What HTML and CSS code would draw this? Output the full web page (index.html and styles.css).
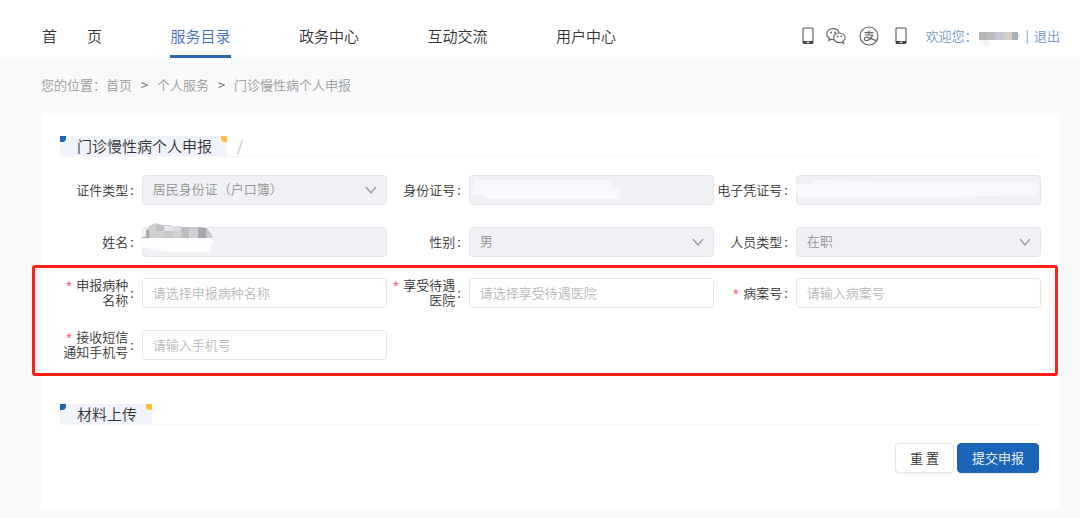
FILE: index.html
```html
<!DOCTYPE html>
<html lang="zh-CN">
<head>
<meta charset="utf-8">
<title>门诊慢性病个人申报</title>
<link rel="stylesheet" href="styles.css">
</head>
<body>
<header class="topbar">
  <nav class="nav">
    <a class="nav-link nav-home" href="#"><span>首</span><span>页</span></a>
    <a class="nav-link active" href="#">服务目录</a>
    <a class="nav-link" href="#">政务中心</a>
    <a class="nav-link" href="#">互动交流</a>
    <a class="nav-link" href="#">用户中心</a>
  </nav>
  <div class="tools">
    <svg class="phone" viewBox="0 0 12 18"><rect x="1" y="1" width="10" height="15.5" rx="1" fill="none" stroke="#555" stroke-width="1.1"/><path d="M1 14h10v2.6H1z" fill="#444"/><path d="M4.500 15.300h3" stroke="#fff"/></svg>
    <svg class="wechat" viewBox="0 0 20 18" fill="none" stroke="#666" stroke-width="1.200"><path d="M8.1 12.600c-1 .1-2-.1-2.900-.4l-2.400 1.300.6-2.200C1.700 10.200.7 8.700.7 7 .7 3.900 3.600 1.600 7 1.600c3 0 5.500 1.700 6.200 4.200"/><path d="M13.400 6c-3.200 0-5.700 2.100-5.700 4.800s2.500 4.800 5.700 4.800c.7 0 1.400-.1 2-.3l2.100 1.100-.5-1.900c1.300-.9 2.100-2.200 2.100-3.700C19.100 8.100 16.600 6 13.400 6z"/><g fill="#666" stroke="none"><circle cx="5" cy="5.500" r="1"/><circle cx="9.200" cy="5.500" r="1"/><circle cx="11.500" cy="9.400" r=".9"/><circle cx="15.300" cy="9.400" r=".9"/></g></svg>
    <svg class="alipay" viewBox="0 0 20 20" fill="none" stroke="#666" stroke-width="1.200"><circle cx="10" cy="10" r="9"/><path d="M5.500 6.700h9M10 4.800v4M6 9h7.500c-.6 2.400-2.300 4.300-4.600 5.300-1.700.7-3.600.2-3.600-1.300 0-1.400 1.600-2 3.300-1.600 3 .7 5.700 2.300 9 3.300"/></svg>
    <svg class="phone" viewBox="0 0 12 18"><rect x="1" y="1" width="10" height="15.5" rx="1" fill="none" stroke="#555" stroke-width="1.1"/><path d="M1 14h10v2.6H1z" fill="#444"/><path d="M4.500 15.300h3" stroke="#fff"/></svg>
    <div class="account">
      <span>欢迎您：</span>
      <svg class="name-mask" viewBox="0 0 43 24"><path d="M0 18l8-5 3 4v6H6l-1-4z" fill="#f3f3f3"/><path d="M1 8h8v8H1z" fill="#b5b5b7"/><path d="M9 8h8v8H9z" fill="#bdbdc0"/><path d="M17 8h9v8h-9z" fill="#c8c8d0"/><path d="M26 8h8v8h-8z" fill="#d4cfca"/><path d="M34 8h6v8h-6z" fill="#a9afb4"/><path d="M40 10h2v3h-2z" fill="#dfe8f1"/></svg>
      <span class="bar">|</span>
      <a href="#">退出</a>
    </div>
  </div>
</header>

<main class="page">
  <div class="crumbs"><span>您的位置：</span><a href="#">首页</a><span class="sep">&gt;</span><a href="#">个人服务</a><span class="sep">&gt;</span><span>门诊慢性病个人申报</span></div>

  <form class="card">
    <div class="section-head"><h2 class="tab">门诊慢性病个人申报</h2><span class="slash">/</span></div>

    <div class="grid">
      <div class="field">
        <label for="idtype"><span>证件类型</span><span class="colon">:</span></label>
        <div class="control"><select id="idtype" disabled><option>居民身份证（户口簿）</option></select><svg class="chevron" viewBox="0 0 12 8"><path d="M1 1l5 6 5-6"/></svg></div>
      </div>
      <div class="field">
        <label for="idno"><span>身份证号</span><span class="colon">:</span></label>
        <div class="control"><input id="idno" type="text" disabled><svg class="mask" viewBox="0 0 245 30"><path d="M6 5h136v7h9v12H16v-4H3z" fill="#f8f9fc"/></svg></div>
      </div>
      <div class="field">
        <label for="ecard"><span>电子凭证号</span><span class="colon">:</span></label>
        <div class="control"><input id="ecard" type="text" disabled><svg class="mask" viewBox="0 0 245 30"><path d="M0 9l17 1V5q30 0 60 2l165 0v13l-50 1q-90 3-188 1L0 17z" fill="#f8f9fc"/></svg></div>
      </div>
      <div class="field">
        <label for="name"><span>姓名</span><span class="colon">:</span></label>
        <div class="control"><input id="name" type="text" disabled><svg class="mask" viewBox="0 0 245 30"><path d="M-2 11h70l5 4-4 4v6H35q-20 0-38-6z" fill="#fdfdfe"/><path d="M-2 11l6-2V4l3-5 6-3 8 2h8v13z" fill="#cfcfd2"/><path d="M-2 11l6-1V3h3v8z" fill="#aaaaae"/><path d="M14-2h8v6h-8z" fill="#bfc1c5"/><path d="M22-1h9v5h-9z" fill="#e3e4e6"/><path d="M31-1h8v5h-8z" fill="#d8dce8"/><path d="M39 0h8v4h-8z" fill="#b9bbc0"/><path d="M47 0h9v4h-9z" fill="#cacacd"/><path d="M22 4h9v7h-9z" fill="#c7c7ca"/><path d="M31 4h8v7h-8z" fill="#d0d0d2"/><path d="M39 4h8v7h-8z" fill="#bebec2"/><path d="M47 4h9v7h-9z" fill="#d2d2d5"/><path d="M56 0l8 1 5 6 1 4H56z" fill="#a7a8ae"/><path d="M64 2l5 5 1 4h-6z" fill="#c9cacd"/></svg></div>
      </div>
      <div class="field">
        <label for="sex"><span>性别</span><span class="colon">:</span></label>
        <div class="control"><select id="sex" disabled><option>男</option></select><svg class="chevron" viewBox="0 0 12 8"><path d="M1 1l5 6 5-6"/></svg></div>
      </div>
      <div class="field">
        <label for="ptype"><span>人员类型</span><span class="colon">:</span></label>
        <div class="control"><select id="ptype" disabled><option>在职</option></select><svg class="chevron" viewBox="0 0 12 8"><path d="M1 1l5 6 5-6"/></svg></div>
      </div>
    </div>

    <div class="grid marked">
      <div class="field">
        <label for="disease"><span><i class="req">*</i>申报病种<br>名称</span><span class="colon">:</span></label>
        <div class="control"><input id="disease" type="text" placeholder="请选择申报病种名称"></div>
      </div>
      <div class="field">
        <label for="hospital"><span><i class="req">*</i>享受待遇<br>医院</span><span class="colon">:</span></label>
        <div class="control"><input id="hospital" type="text" placeholder="请选择享受待遇医院"></div>
      </div>
      <div class="field">
        <label for="caseno"><span><i class="req">*</i>病案号</span><span class="colon">:</span></label>
        <div class="control"><input id="caseno" type="text" placeholder="请输入病案号"></div>
      </div>
      <div class="field">
        <label for="mobile"><span><i class="req">*</i>接收短信<br>通知手机号</span><span class="colon">:</span></label>
        <div class="control"><input id="mobile" type="text" placeholder="请输入手机号"></div>
      </div>
    </div>

    <div class="section-head upload"><h2 class="tab">材料上传</h2></div>

    <div class="actions">
      <button class="btn" type="reset">重 置</button>
      <button class="btn primary" type="submit">提交申报</button>
    </div>
  </form>
</main>
</body>
</html>
```
FILE: styles.css
```css
* { box-sizing: border-box; }

body {
  margin: 0;
  background: #f8f9fb;
  color: #333;
  font: 350 13px/20px "Noto Sans CJK SC", sans-serif;
}

a { color: inherit; text-decoration: none; }
svg { display: block; flex: none; overflow: visible; }

.topbar {
  display: flex;
  justify-content: space-between;
  padding: 0 20px 0 42px;
  background: #fff;
}

.nav {
  display: flex;
  justify-content: space-between;
  flex: 0 1 574px;
  margin-bottom: -1px;
  color: #333;
  font-size: 15px;
  line-height: 22px;
}

.nav-link {
  padding: 25px 0 8px;
  border-bottom: 3px solid transparent;
  white-space: nowrap;
}

.nav-home { display: flex; justify-content: space-between; width: 60px; }
.nav-link.active { color: #3f6fbe; border-color: #2f66b3; }

.tools { display: flex; align-items: center; padding-top: 15px; }
.phone { width: 12px; height: 18px; }
.wechat { width: 20px; height: 18px; margin: 0 13px 0 12px; }
.alipay { width: 20px; height: 20px; margin-right: 16px; }
.account { display: flex; align-items: center; margin-left: 19px; color: #6a93c8; }
.name-mask { width: 43px; height: 24px; margin-right: 5px; }
.bar { margin-right: 5px; }

.page { padding: 18px 20px 8px 41px; }

.crumbs { display: flex; margin-bottom: 18px; color: #999; }
.sep { width: 25px; text-align: center; color: #666; }

.card { padding: 23px 19px 37px; background: #fff; }

.section-head {
  display: flex;
  align-items: center;
  gap: 10px;
  margin-right: 1px;
  border-bottom: 1px solid #f5f6f8;
}

.tab {
  position: relative;
  margin: 0;
  padding: 0 15px 0 17px;
  background: #f0f3fa;
  color: #333;
  font-size: 15px;
  font-weight: 350;
  line-height: 20px;
}

.tab::before, .tab::after {
  content: "";
  position: absolute;
  top: 0;
  width: 6px;
  height: 6px;
}

.tab::before { left: 0; background: #1b65b9; border-bottom-right-radius: 4px; }
.tab::after { right: 0; background: #ffbc3d; border-bottom-left-radius: 4px; }
.slash { color: #b0b8c2; font-size: 15px; }

.grid {
  display: grid;
  grid-template-columns: repeat(3, 1fr);
  gap: 22px 0;
  margin-top: 18px;
}

.marked { position: relative; margin-top: 21px; }

.marked::after {
  content: "";
  position: absolute;
  inset: -13px -17px -16px -28px;
  border: 3px solid #fe1f17;
  border-radius: 3px;
  pointer-events: none;
}

.field { display: flex; align-items: center; height: 30px; }

.field label {
  display: flex;
  flex: 0 0 25%;
  align-items: center;
  justify-content: flex-end;
  padding: 0 8px 2px 0;
  line-height: 15px;
  text-align: right;
  white-space: nowrap;
}

.colon { margin-left: 2px; }

.req {
  margin-right: 3px;
  color: #ff4d64;
  font: 14px/8px "Liberation Mono", monospace;
  vertical-align: -2px;
}

.control { position: relative; flex: 1; }

.control input, .control select {
  display: block;
  width: 100%;
  height: 30px;
  padding: 0 10px 2px;
  border: 1px solid #e3e5ea;
  border-radius: 4px;
  background: #fff;
  color: #444;
  font: inherit;
  appearance: none;
}

.control input:disabled, .control select:disabled {
  background: #f0f1f5;
  color: #929292;
  opacity: 1;
}

.control input::placeholder { color: #b8b8b8; opacity: 1; }

.chevron {
  position: absolute;
  top: 11px;
  right: 10px;
  width: 12px;
  height: 8px;
  fill: none;
  stroke: #999;
  stroke-width: 1.2;
  pointer-events: none;
}

.mask { position: absolute; top: 0; left: 0; width: 100%; height: 30px; pointer-events: none; }

.upload { margin-top: 44px; }

.actions {
  display: flex;
  justify-content: flex-end;
  gap: 3px;
  margin: 18px 2px 0 0;
}

.btn {
  height: 30px;
  padding: 0 14px 1px;
  border: 1px solid #e3e5ea;
  border-radius: 4px;
  background: #fff;
  color: #333;
  font: inherit;
  box-shadow: 0 1px 1px #eef0f3;
}

.btn.primary { border-color: #1b65b9; background: #1b65b9; color: #fff; }
```
